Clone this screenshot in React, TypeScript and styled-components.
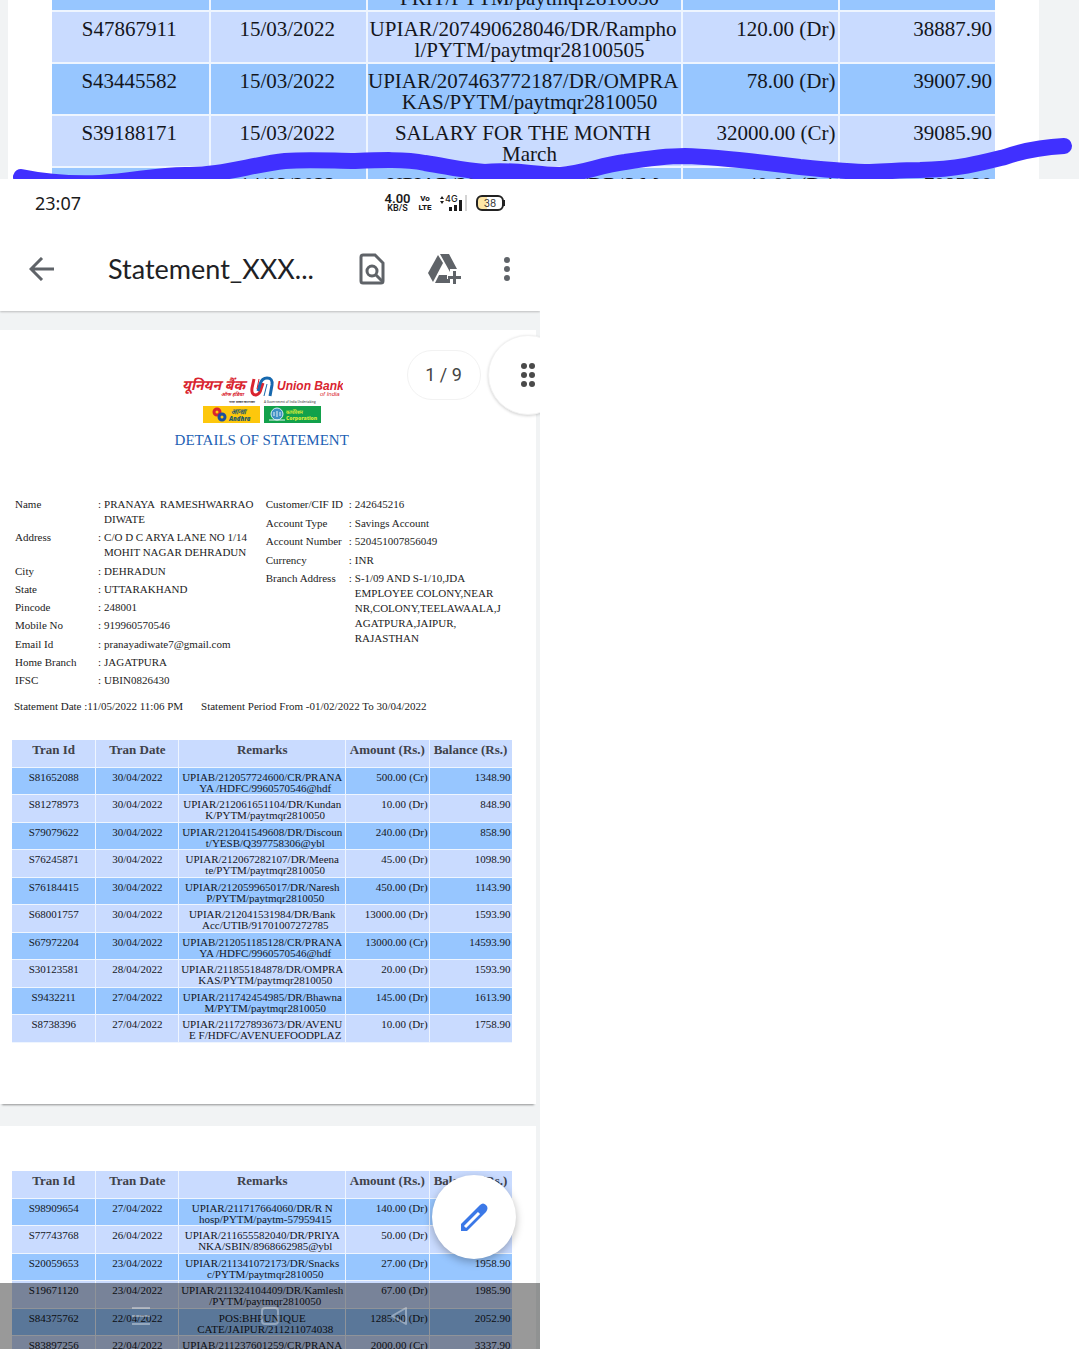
import React from 'react';
import styled, { createGlobalStyle } from 'styled-components';

const serif = '"Liberation Serif", "Times New Roman", serif';
const sans = 'Lato, "Noto Sans", sans-serif';

const GlobalStyle = createGlobalStyle`
  *, *::before, *::after { box-sizing: border-box; }
  body { margin: 0; background: #fff; }
`;

const Collage = styled.main`
  display: grid;
  grid-template-rows: 179px minmax(0, 1fr);
  height: 100vh;
  overflow: hidden;
`;

/* ---------- Statement tables ---------- */

const Table = styled.table<{ $large?: boolean }>`
  width: 100%;
  table-layout: fixed;
  border-collapse: separate;
  border-spacing: 0;
  font-family: ${serif};
  font-size: ${p => (p.$large ? 21 : 11)}px;
  line-height: ${p => (p.$large ? 21 : 11)}px;
  color: #14161c;

  th, td {
    border: 0 solid #eef5ff;
    border-bottom-width: ${p => (p.$large ? 2 : 1)}px;
    border-left-width: ${p => (p.$large ? 2 : 1)}px;
    vertical-align: top;
    text-align: center;
    white-space: nowrap;
    padding: ${p => (p.$large ? '7px 3px 0 0' : '4px 0 0')};
  }
  th:first-child, td:first-child { border-left-width: 0; }
`;

const HeadCell = styled.th`
  && { padding-top: 3px; }
  height: 28px;
  background: #c9dbff;
  color: #40424a;
  font-size: 13px;
  line-height: 13px;
`;

const BodyRow = styled.tr<{ $tone: 'sky' | 'pale'; $large?: boolean }>`
  height: ${p => (p.$large ? 52 : p.$tone === 'sky' ? 27 : 28)}px;
  background: ${p => (p.$tone === 'sky' ? '#97c6ff' : '#c9dbff')};
`;

const MoneyCell = styled.td<{ $large?: boolean }>`
  && { text-align: right; padding-right: ${p => (p.$large ? 3 : 1)}px; }
`;

const Continuation = styled.span<{ $large?: boolean }>`
  display: block;
  padding-left: ${p => (p.$large ? 13 : 6)}px;
`;

type Row = [string, string, string, string, string, string];

const Columns = () => (
  <colgroup>
    <col width="16.7%" />
    <col width="16.6%" />
    <col width="33.4%" />
    <col width="16.7%" />
    <col width="16.6%" />
  </colgroup>
);

const Transactions = ({ rows, large }: { rows: Row[]; large?: boolean }) => (
  <Table $large={large}>
    <Columns />
    {!large && (
      <thead>
        <tr>
          {['Tran Id', 'Tran Date', 'Remarks', 'Amount (Rs.)', 'Balance (Rs.)'].map(h => (
            <HeadCell key={h} scope="col">{h}</HeadCell>
          ))}
        </tr>
      </thead>
    )}
    <tbody>
      {rows.map((r, i) => (
        <BodyRow key={i} $large={large} $tone={i % 2 === 0 ? 'sky' : 'pale'}>
          <td>{r[0]}</td>
          <td>{r[1]}</td>
          <td>{r[2]}<Continuation $large={large}>{r[3]}</Continuation></td>
          <MoneyCell $large={large}>{r[4]}</MoneyCell>
          <MoneyCell $large={large}>{r[5]}</MoneyCell>
        </BodyRow>
      ))}
    </tbody>
  </Table>
);

const salaryRows: Row[] = [
  ['', '', '\u00a0', 'FRIT/PYTM/paytmqr2810050', '', ''],
  ['S47867911', '15/03/2022', 'UPIAR/207490628046/DR/Rampho', 'l/PYTM/paytmqr28100505', '120.00 (Dr)', '38887.90'],
  ['S43445582', '15/03/2022', 'UPIAR/207463772187/DR/OMPRA', 'KAS/PYTM/paytmqr2810050', '78.00 (Dr)', '39007.90'],
  ['S39188171', '15/03/2022', 'SALARY FOR THE MONTH', 'March', '32000.00 (Cr)', '39085.90'],
  ['', '14/03/2022', 'UPIAR/207351862095/DR/S M', '', '40.00 (Dr)', '7085.90'],
];

const pageOneRows: Row[] = [
  ['S81652088', '30/04/2022', 'UPIAB/212057724600/CR/PRANA', 'YA /HDFC/9960570546@hdf', '500.00 (Cr)', '1348.90'],
  ['S81278973', '30/04/2022', 'UPIAR/212061651104/DR/Kundan', 'K/PYTM/paytmqr2810050', '10.00 (Dr)', '848.90'],
  ['S79079622', '30/04/2022', 'UPIAR/212041549608/DR/Discoun', 't/YESB/Q397758306@ybl', '240.00 (Dr)', '858.90'],
  ['S76245871', '30/04/2022', 'UPIAR/212067282107/DR/Meena', 'te/PYTM/paytmqr2810050', '45.00 (Dr)', '1098.90'],
  ['S76184415', '30/04/2022', 'UPIAR/212059965017/DR/Naresh', 'P/PYTM/paytmqr2810050', '450.00 (Dr)', '1143.90'],
  ['S68001757', '30/04/2022', 'UPIAR/212041531984/DR/Bank', 'Acc/UTIB/91701007272785', '13000.00 (Dr)', '1593.90'],
  ['S67972204', '30/04/2022', 'UPIAB/212051185128/CR/PRANA', 'YA /HDFC/9960570546@hdf', '13000.00 (Cr)', '14593.90'],
  ['S30123581', '28/04/2022', 'UPIAR/211855184878/DR/OMPRA', 'KAS/PYTM/paytmqr2810050', '20.00 (Dr)', '1593.90'],
  ['S9432211', '27/04/2022', 'UPIAR/211742454985/DR/Bhawna', 'M/PYTM/paytmqr2810050', '145.00 (Dr)', '1613.90'],
  ['S8738396', '27/04/2022', 'UPIAR/211727893673/DR/AVENU', 'E F/HDFC/AVENUEFOODPLAZ', '10.00 (Dr)', '1758.90'],
];

const pageTwoRows: Row[] = [
  ['S98909654', '27/04/2022', 'UPIAR/211717664060/DR/R N', 'hosp/PYTM/paytm-57959415', '140.00 (Dr)', ''],
  ['S77743768', '26/04/2022', 'UPIAR/211655582040/DR/PRIYA', 'NKA/SBIN/8968662985@ybl', '50.00 (Dr)', ''],
  ['S20059653', '23/04/2022', 'UPIAR/211341072173/DR/Snacks', 'c/PYTM/paytmqr2810050', '27.00 (Dr)', '1958.90'],
  ['S19671120', '23/04/2022', 'UPIAR/211324104409/DR/Kamlesh', '/PYTM/paytmqr2810050', '67.00 (Dr)', '1985.90'],
  ['S84375762', '22/04/2022', 'POS:BHPUNIQUE', 'CATE/JAIPUR/211211074038', '1285.00 (Dr)', '2052.90'],
  ['S83897256', '22/04/2022', 'UPIAB/211237601259/CR/PRANA', '', '2000.00 (Cr)', '3337.90'],
];

/* ---------- Cropped close-up at the top ---------- */

const CloseUp = styled.section`
  position: relative;
  overflow: hidden;
  background: #f1f3f4;
  padding: 0 40px 0 8px;
`;

const CloseUpSheet = styled.div`
  height: 179px;
  overflow: hidden;
  background: #fff;
  padding: 0 44px;

  table { margin-top: -40px; }
`;

const Marker = styled.svg`
  position: absolute;
  inset: 0;
  width: 100%;
  height: 100%;
`;

/* ---------- Phone screen ---------- */

const Phone = styled.section`
  position: relative;
  width: 50%;
  min-height: 0;
  overflow: hidden;
  background: #f1f3f4;
`;

const TopChrome = styled.header`
  position: relative;
  background: #fff;
  box-shadow: 0 1px 2px rgba(0, 0, 0, 0.22);
`;

const StatusBar = styled.div`
  display: flex;
  align-items: center;
  justify-content: space-between;
  height: 48px;
  padding: 0 34px 0 35px;
  color: #1b1b1b;
`;

const Clock = styled.time`
  font-family: "Noto Sans", sans-serif;
  font-size: 18px;
  line-height: 24px;
`;

const StatusIcons = styled.div`
  display: flex;
  align-items: center;
  gap: 8px;
`;

const Speed = styled.div`
  display: flex;
  flex-direction: column;
  align-items: center;
  font-family: Roboto, sans-serif;
  font-weight: 600;
  font-size: 13px;
  line-height: 10px;

  small { font-size: 9px; line-height: 9px; }
`;

const Volte = styled(Speed)`
  font-weight: 800;
  font-size: 8px;
  line-height: 9px;
`;

const AppBar = styled.div`
  display: flex;
  align-items: center;
  height: 84px;
  padding: 0 15px 0 24px;
  color: #5f6368;
`;

const IconButton = styled.button`
  display: grid;
  place-items: center;
  flex: none;
  width: 36px;
  height: 36px;
  padding: 0;
  border: 0;
  background: none;
  color: inherit;
`;

const FileName = styled.h1`
  flex: 1;
  margin: 0 0 0 48px;
  font-family: ${sans};
  font-size: 27px;
  line-height: 36px;
  font-weight: 400;
  color: #202124;
  white-space: nowrap;
`;

const Actions = styled.div`
  display: flex;
  gap: 36px;

  button:last-child { margin-left: -9px; }
`;

const Sheets = styled.div`
  display: grid;
  gap: 22px;
  padding: 19px 4px 0 0;
`;

const Sheet = styled.article<{ $first?: boolean }>`
  padding: ${p => (p.$first ? 46 : 45)}px 24px 61px 12px;
  background: #fff;
  box-shadow: 0 3px 2px -2px rgba(0, 0, 0, 0.4);
`;

const Letterhead = styled.header`
  display: grid;
  justify-items: center;
`;

const StatementTitle = styled.h2`
  margin: 7px 0 0;
  font-family: ${serif};
  font-size: 15px;
  line-height: 18px;
  font-weight: 400;
  color: #1d5fb4;
`;

const Holder = styled.div`
  display: grid;
  grid-template-columns: 253fr 248fr;
  margin: 48px 0 0 3px;
`;

const Facts = styled.dl`
  display: flex;
  flex-direction: column;
  justify-content: space-between;
  align-self: start;
  gap: 3px;
  min-height: 191px;
  margin: 0;
  font-family: ${serif};
  font-size: 11px;
  line-height: 15px;
  color: #1c1c1c;
`;

const ShortFacts = styled(Facts)`
  min-height: 149px;
`;

const Fact = styled.div`
  display: grid;
  grid-template-columns: 83px 1fr;

  dt, dd { margin: 0; white-space: pre; }
  dd { display: flex; gap: 3px; }
  dd::before { content: ':'; }
`;

const Period = styled.p`
  display: flex;
  gap: 18px;
  margin: 10px 0 26px 2px;
  font-family: ${serif};
  font-size: 11px;
  line-height: 16px;
  color: #1c1c1c;
  white-space: nowrap;
`;

const PageBadge = styled.div`
  position: absolute;
  top: 171px;
  right: 59px;
  width: 74px;
  height: 50px;
  border: 1px solid #f2f2f2;
  border-radius: 25px;
  background: #fff;
  font: 18px/48px Roboto, sans-serif;
  color: #444;
  text-align: center;
  white-space: pre;
`;

const ScrollHandle = styled.button`
  position: absolute;
  top: 156px;
  right: -28px;
  width: 80px;
  height: 80px;
  padding: 0;
  border: 1px solid #f2f2f2;
  border-radius: 50%;
  background: #fff;
  box-shadow: 0 1px 3px rgba(0, 0, 0, 0.18);
  display: grid;
  place-items: center;
`;

const EditButton = styled.button`
  position: absolute;
  right: 24px;
  bottom: 90px;
  width: 84px;
  height: 84px;
  padding: 0;
  border: 0;
  border-radius: 50%;
  background: #fff;
  box-shadow: 0 3px 8px rgba(0, 0, 0, 0.28);
  display: grid;
  place-items: center;
`;

const NavBar = styled.nav`
  position: absolute;
  left: 0;
  right: 0;
  bottom: 0;
  height: 66px;
  display: flex;
  align-items: center;
  justify-content: center;
  gap: 93px;
  background: rgba(0, 0, 0, 0.4);
  color: rgba(255, 255, 255, 0.36);
`;

const facts: [string, string][] = [
  ['Name', 'PRANAYA  RAMESHWARRAO\nDIWATE'],
  ['Address', 'C/O D C ARYA LANE NO 1/14\nMOHIT NAGAR DEHRADUN'],
  ['City', 'DEHRADUN'],
  ['State', 'UTTARAKHAND'],
  ['Pincode', '248001'],
  ['Mobile No', '919960570546'],
  ['Email Id', 'pranayadiwate7@gmail.com'],
  ['Home Branch', 'JAGATPURA'],
  ['IFSC', 'UBIN0826430'],
];

const accountFacts: [string, string][] = [
  ['Customer/CIF ID', '242645216'],
  ['Account Type', 'Savings Account'],
  ['Account Number', '520451007856049'],
  ['Currency', 'INR'],
  ['Branch Address', 'S-1/09 AND S-1/10,JDA\nEMPLOYEE COLONY,NEAR\nNR,COLONY,TEELAWAALA,J\nAGATPURA,JAIPUR,\nRAJASTHAN'],
];

const FactItems = ({ items }: { items: [string, string][] }) => (
  <>
    {items.map(([label, value]) => (
      <Fact key={label}>
        <dt>{label}</dt>
        <dd><span>{value}</span></dd>
      </Fact>
    ))}
  </>
);

const BankLogo = () => (
  <svg width="162" height="48" viewBox="0 0 162 48" role="img" aria-label="Union Bank of India">
    <g fontFamily='"Noto Sans Devanagari", "Noto Sans", sans-serif' fontStyle="italic" fontWeight="700" fill="#d9242f">
      <text x="1" y="14" fontSize="14">यूनियन बैंक</text>
      <text x="40" y="20" fontSize="5">ऑफ इंडिया</text>
    </g>
    <g fill="none" strokeWidth="4">
      <path d="M73 3 L71 12 Q70 19 75 19 Q79 18 80 13 L82 7" stroke="#d9242f" strokeWidth="3" />
      <path d="M77 15 L79 8 Q81 2 86 2 Q92 2 91 9 L89 20" stroke="#1668ae" strokeWidth="3" />
      <path d="M83 20 L86 8" stroke="#1668ae" strokeWidth="1" />
      <path d="M76 13 L78 3" stroke="#d9242f" strokeWidth="1" />
    </g>
    <g fontFamily='"Liberation Sans", sans-serif' fontStyle="italic" fill="#d9242f">
      <text x="96" y="14" fontSize="12" fontWeight="700">Union Bank</text>
      <text x="139" y="20" fontSize="6">of India</text>
    </g>
    <g fontFamily='"Open Sans", sans-serif' fontSize="3" fontWeight="600" fill="#555">
      <text x="48" y="27">भारत सरकार का उपक्रम</text>
      <text x="83" y="27">A Government of India Undertaking</text>
    </g>
    <rect x="22" y="30" width="57" height="17" fill="#fdc70c" />
    <circle cx="36" cy="36" r="3" fill="none" stroke="#d9242f" strokeWidth="3" />
    <circle cx="41" cy="41" r="3" fill="none" stroke="#1c4f9c" strokeWidth="3" />
    <rect x="83" y="30" width="57" height="17" fill="#12a14b" />
    <circle cx="96" cy="38" r="6" fill="#3f8fc4" stroke="#d8eef5" />
    <path d="M88 44 h16 M93 36 v4 M96 35 v6 M99 36 v4" stroke="#e6f4f7" strokeWidth="1" />
    <g fontFamily='"Open Sans", sans-serif' fontWeight="800">
      <text x="50" y="38" fontSize="7" fontStyle="italic" fill="#1f5a6b">आन्ध्रा</text>
      <text x="48" y="45" fontSize="6" fontStyle="italic" fill="#1f5a6b">Andhra</text>
      <text x="105" y="38" fontSize="5" fill="#d8ea3a">कार्पोरेशन</text>
      <text x="105" y="44" fontSize="5" fill="#d8ea3a">Corporation</text>
    </g>
  </svg>
);

export default function App() {
  return (
    <>
      <GlobalStyle />
      <Collage>
        <CloseUp>
          <CloseUpSheet>
            <Transactions rows={salaryRows} large />
          </CloseUpSheet>
          <Marker viewBox="0 0 1079 179" preserveAspectRatio="none" aria-hidden="true">
            <path
              d="M21 177 C45 182 75 184 100 183 C135 181 155 175 185 175 C220 176 250 165 285 161 C310 159 335 161 355 161 C380 160 405 159 425 163 C450 167 465 171 485 172 C510 169 530 174 560 175 C585 173 600 165 625 162 C650 158 665 156 685 156 C720 157 760 162 800 167 C830 170 850 172 870 172 C895 171 900 170 920 170 C960 169 985 162 1005 157 C1025 150 1045 147 1064 146"
              fill="none"
              stroke="#4030ff"
              strokeWidth="16"
              strokeLinecap="round"
              strokeLinejoin="round"
            />
          </Marker>
        </CloseUp>

        <Phone>
          <TopChrome>
            <StatusBar>
              <Clock>23:07</Clock>
              <StatusIcons>
                <Speed>4.00<small>KB/S</small></Speed>
                <Volte><span>Vo</span><span>LTE</span></Volte>
                <svg width="28" height="18" viewBox="0 0 28 18" aria-label="4G signal">
                  <path d="M0 5 L2 2 L4 5 Z M0 7 L2 10 L4 7 Z" fill="#1b1b1b" />
                  <text x="5" y="8" fontSize="9" fontFamily="Inter, sans-serif" fontWeight="500" fill="#1b1b1b">4G</text>
                  <path d="M9 13h3v4h-3z M14 11h3v6h-3z M19 6h3v11h-3z" fill="#1b1b1b" />
                  <path d="M25 1h2v16h-2z" fill="#d4d4d4" />
                </svg>
                <svg width="30" height="16" viewBox="0 0 30 16" aria-label="Battery 38 percent">
                  <path d="M5 1 H11 V15 H5 Q1 15 1 11 V5 Q1 1 5 1 Z" fill="#fde6a6" />
                  <rect x="1" y="1" width="26" height="14" rx="5" fill="none" stroke="#222" strokeWidth="2" />
                  <path d="M28 5 v6" stroke="#222" strokeWidth="2" />
                  <text x="14" y="12" textAnchor="middle" fontSize="10" fontFamily="Inter, sans-serif" fill="#333">38</text>
                </svg>
              </StatusIcons>
            </StatusBar>
            <AppBar>
              <IconButton aria-label="Back">
                <svg width="26" height="24" viewBox="0 0 26 24" fill="none" stroke="currentColor" strokeWidth="3">
                  <path d="M25 12 H3 M13 1 L2 12 L13 23" />
                </svg>
              </IconButton>
              <FileName>Statement_XXX...</FileName>
              <Actions>
                <IconButton aria-label="Find in document">
                  <svg width="26" height="32" viewBox="0 0 26 32" fill="none" stroke="currentColor" strokeWidth="3">
                    <path d="M4 2 H16 L24 10 V28 Q24 30 22 30 H4 Q2 30 2 28 V4 Q2 2 4 2 Z" />
                    <circle cx="13" cy="18" r="5" />
                    <path d="M17 22 L24 29" />
                  </svg>
                </IconButton>
                <IconButton aria-label="Add to Drive">
                  <svg width="34" height="32" viewBox="0 0 34 32" fill="currentColor">
                    <path d="M11 2 L16 10 L6 29 L1 20 Z" />
                    <path d="M13 1 H22 L30 16 H23 V19 Z" />
                    <path d="M12 22 H20 V26 H23 V30 H8 Z" />
                    <path d="M26 18 H29 V23 H34 V26 H29 V31 H26 V26 H21 V23 H26 Z" />
                  </svg>
                </IconButton>
                <IconButton aria-label="More options">
                  <svg width="8" height="26" viewBox="0 0 8 26" fill="currentColor">
                    <circle cx="4" cy="4" r="3" />
                    <circle cx="4" cy="13" r="3" />
                    <circle cx="4" cy="22" r="3" />
                  </svg>
                </IconButton>
              </Actions>
            </AppBar>
          </TopChrome>

          <Sheets>
            <Sheet $first>
              <Letterhead>
                <BankLogo />
                <StatementTitle>DETAILS OF STATEMENT</StatementTitle>
              </Letterhead>
              <Holder>
                <Facts><FactItems items={facts} /></Facts>
                <ShortFacts><FactItems items={accountFacts} /></ShortFacts>
              </Holder>
              <Period>
                <span>Statement Date :11/05/2022 11:06 PM</span>
                <span>Statement Period From -01/02/2022 To 30/04/2022</span>
              </Period>
              <Transactions rows={pageOneRows} />
            </Sheet>
            <Sheet>
              <Transactions rows={pageTwoRows} />
            </Sheet>
          </Sheets>

          <PageBadge>1 / 9</PageBadge>
          <ScrollHandle aria-label="Scroll pages">
            <svg width="18" height="26" viewBox="0 0 18 26" fill="#4a4a4a">
              {[4, 13, 22].map(y => (
                <React.Fragment key={y}>
                  <circle cx="5" cy={y} r="3" />
                  <circle cx="13" cy={y} r="3" />
                </React.Fragment>
              ))}
            </svg>
          </ScrollHandle>
          <EditButton aria-label="Edit">
            <svg width="30" height="30" viewBox="0 0 30 30" fill="none">
              <path d="M2 29 V22 L21 3 Q24 0 27 3 Q30 6 27 10 L8 29 Z" fill="#3b78e7" />
              <path d="M6 25 L20 11" stroke="#fff" strokeWidth="3" />
            </svg>
          </EditButton>
          <NavBar aria-label="System navigation">
            <IconButton aria-label="Recent apps">
              <svg width="18" height="20" viewBox="0 0 18 20" stroke="currentColor" strokeWidth="2">
                <path d="M0 2 H18 M0 10 H18 M0 18 H18" />
              </svg>
            </IconButton>
            <IconButton aria-label="Home">
              <svg width="18" height="18" viewBox="0 0 18 18" fill="none" stroke="currentColor" strokeWidth="2">
                <rect x="1" y="1" width="16" height="16" rx="3" />
              </svg>
            </IconButton>
            <IconButton aria-label="Go back">
              <svg width="18" height="20" viewBox="0 0 18 20" fill="none" stroke="currentColor" strokeWidth="2" strokeLinejoin="round">
                <path d="M16 2 V18 L2 10 Z" />
              </svg>
            </IconButton>
          </NavBar>
        </Phone>
      </Collage>
    </>
  );
}
